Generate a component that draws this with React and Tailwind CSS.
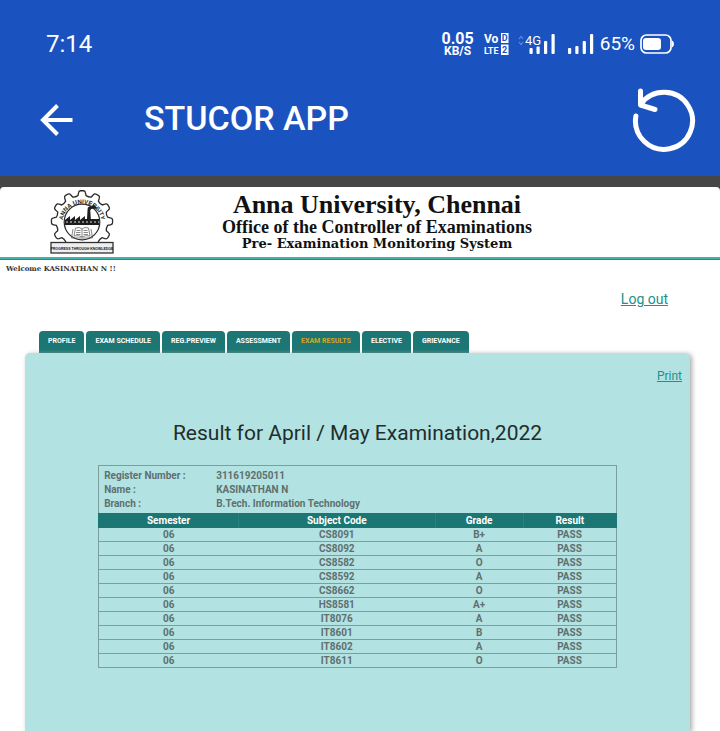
const tabs = ["PROFILE", "EXAM SCHEDULE", "REG.PREVIEW", "ASSESSMENT", "EXAM RESULTS", "ELECTIVE", "GRIEVANCE"];

const details = [
  ["Register Number :", "311619205011"],
  ["Name :", "KASINATHAN N"],
  ["Branch :", "B.Tech. Information Technology"],
];

const results = [
  ["06", "CS8091", "B+", "PASS"],
  ["06", "CS8092", "A", "PASS"],
  ["06", "CS8582", "O", "PASS"],
  ["06", "CS8592", "A", "PASS"],
  ["06", "CS8662", "O", "PASS"],
  ["06", "HS8581", "A+", "PASS"],
  ["06", "IT8076", "A", "PASS"],
  ["06", "IT8601", "B", "PASS"],
  ["06", "IT8602", "A", "PASS"],
  ["06", "IT8611", "O", "PASS"],
];

// Outline of a twelve-toothed gear around (cx, cy).
function gearPath(cx, cy, outer, root) {
  const at = (r, deg) => {
    const a = (deg * Math.PI) / 180;
    return `${(cx + r * Math.sin(a)).toFixed(2)} ${(cy - r * Math.cos(a)).toFixed(2)}`;
  };
  let d = `M${at(root, -9)}`;
  for (let i = 0; i < 12; i++) {
    const t = i * 30;
    d += `L${at(outer - 2, t - 7)}Q${at(outer, t - 6)} ${at(outer, t - 3)}L${at(outer, t + 3)}Q${at(outer, t + 6)} ${at(outer - 2, t + 7)}L${at(root, t + 9)}Q${at(root - 1, t + 15)} ${at(root, t + 21)}`;
  }
  return d + "Z";
}

function UniversityLogo() {
  return (
    <svg viewBox="0 0 64 64" className="size-16" role="img" aria-label="Anna University">
      <path d={gearPath(32, 31.3, 30.6, 26)} fill="#fff" stroke="#2b2b2b" strokeWidth="1.3" />
      <path id="ring" d="M12.6 33 A19.4 19.4 0 0 1 51.4 33" fill="none" />
      <text fontSize="6" fill="#222" className="font-['Liberation_Sans'] font-bold" textAnchor="middle">
        <textPath href="#ring" startOffset="50%">ANNA UNIVERSITY</textPath>
      </text>
      <circle cx="32" cy="32" r="17.8" fill="#fff" stroke="#2b2b2b" strokeWidth="1.2" />
      <path d="M15 35V30l5-4v4l5-4v4l5-4v4l5-4v3h2l.6-10h2.600l.6 10H49v6z" fill="#1d1d1d" />
      <path d="M37.500 18.500c1-3 5-1.500 6-3.500l4 3c-2 2-6-.5-7 2z" fill="#1d1d1d" />
      <path d="M16 32h33" stroke="#ddd" strokeWidth="1" strokeDasharray="2 2" />
      <path d="M25.500 38q4-1.500 6.500 1q2.500-2.500 6.500-1l1.500 8q-5-1-8 1q-3-2-8-1zM32 39v8M26.500 40.500h4M26 42.500h4.500M26 44.500h4.500M33.500 40.500h4M33.500 42.500h4.500M33.500 44.500h4.500M23 39l-1.500 9h21L41 39" fill="none" stroke="#555" strokeWidth=".7" />
      <rect x="1" y="52.500" width="62" height="10.500" fill="#eee" stroke="#333" strokeWidth="1.3" />
      <text x="32" y="59.500" fontSize="3.500" fill="#111" textAnchor="middle" className="font-['Liberation_Sans'] font-bold">
        PROGRESS THROUGH KNOWLEDGE
      </text>
    </svg>
  );
}

function VoLte() {
  return (
    <svg viewBox="0 0 25 22" className="h-[22px] w-[25px] font-[Roboto] font-bold" role="img" aria-label="VoLTE 2">
      <text x="0" y="10" fontSize="12" fill="#fff">Vo</text>
      <text x="0" y="21" fontSize="9" fill="#fff">LTE</text>
      <path d="M17 0h7.500v10H17zM17 11.500h7.500V22H17z" fill="#fff" />
      <text x="20.700" y="8.300" fontSize="9" fill="#1a53bf" textAnchor="middle">D</text>
      <text x="20.700" y="20" fontSize="9" fill="#1a53bf" textAnchor="middle">2</text>
    </svg>
  );
}

function MobileSignal() {
  return (
    <svg viewBox="0 0 38 22" className="h-[22px] w-[38px]" role="img" aria-label="4G signal">
      <path d="M1 6l2-2.500L5 6M1 9l2 2.500L5 9" fill="none" stroke="#5f8bdd" strokeWidth="1.200" />
      <text x="7" y="12" fontSize="13" fill="#fff" className="font-[Roboto]">4G</text>
      <g fill="#fff">
        <rect x="11.500" y="15" width="3.200" height="6" rx="1" />
        <rect x="18.500" y="13.500" width="3.200" height="7.500" rx="1" />
        <rect x="26" y="8" width="3.200" height="13" rx="1" />
        <rect x="33.500" y="1" width="3.200" height="20" rx="1" />
      </g>
    </svg>
  );
}

function Signal() {
  return (
    <svg viewBox="0 0 27 22" className="h-[22px] w-[27px]" role="img" aria-label="Signal" fill="#fff">
      <rect x="1" y="15" width="3.200" height="6" rx="1" />
      <rect x="8.300" y="13" width="3.200" height="8" rx="1" />
      <rect x="15.700" y="8" width="3.200" height="13" rx="1" />
      <rect x="23" y="1" width="3.200" height="20" rx="1" />
    </svg>
  );
}

function Battery() {
  return (
    <svg viewBox="0 0 34 20" className="h-5 w-[34px]" role="img" aria-label="Battery">
      <rect x="1" y="1" width="30" height="18" rx="5.500" fill="none" stroke="#fff" strokeWidth="1.700" />
      <rect x="3" y="4" width="18" height="12" rx="3" fill="#fff" />
      <path d="M32 6.500q2 .5 2 3.500t-2 3.500z" fill="#fff" />
    </svg>
  );
}

function AppHeader() {
  return (
    <header className="h-44 bg-[#1a53bf] font-[Roboto,sans-serif] text-white">
      <div className="flex h-[88px] items-center justify-between px-[46px]">
        <span className="text-2xl">7:14</span>
        <div className="flex items-center">
          <div className="mr-[10px] text-center font-bold">
            <div className="text-base leading-[14px]">0.05</div>
            <div className="text-xs leading-[11px]">KB/S</div>
          </div>
          <span className="mr-[9px]"><VoLte /></span>
          <span className="mr-[11px]"><MobileSignal /></span>
          <span className="mr-[6px]"><Signal /></span>
          <span className="mr-[5px] text-[19px]">65%</span>
          <Battery />
        </div>
      </div>
      <div className="flex h-16 items-center pr-6 pl-10">
        <button type="button" aria-label="Back" className="mr-[71px]">
          <svg viewBox="0 0 33 32" className="h-8 w-[33px]" fill="none" stroke="#fff" strokeWidth="4">
            <path d="M17.500 1.500L3 16l14.500 14.500M3 16h29.500" />
          </svg>
        </button>
        <h1 className="flex-1 pb-1 text-[34px] font-medium">STUCOR APP</h1>
        <button type="button" aria-label="Reload">
          <svg viewBox="0 0 64 66" className="h-[66px] w-16" fill="none" stroke="#fff" strokeWidth="5" strokeLinecap="round" strokeLinejoin="round">
            <path d="M3.900 29A28.500 28.500 0 1 0 9 17M8.500 4v14L23 22.500" />
          </svg>
        </button>
      </div>
    </header>
  );
}

export default function App() {
  return (
    <div className="flex min-h-screen flex-col bg-[#464646]">
      <AppHeader />
      <div className="mt-[11px] flex flex-1 flex-col rounded-t bg-white">
        <div className="relative flex h-[70px] justify-center">
          <div className="absolute top-[3px] left-[50px]"><UniversityLogo /></div>
          <div className="pt-[5px] pl-[34px] text-center font-['Liberation_Serif',serif] font-bold text-[#111]">
            <p className="text-[26px] leading-[26px]">Anna University, Chennai</p>
            <p className="text-lg leading-[18px]">Office of the Controller of Examinations</p>
            <p className="font-['DejaVu_Serif',serif] text-[13px] leading-4">Pre- Examination Monitoring System</p>
          </div>
        </div>
        <div className="h-[3px] border-b border-[#2f8583] bg-[#41b3ab]" />
        <p className="pt-px pl-[6px] font-['DejaVu_Serif',serif] text-[7px] leading-4 font-bold text-[#333]">Welcome KASINATHAN N !!</p>
        <div className="flex h-[54px] items-start justify-end pt-3 pr-[52px] font-[Roboto,sans-serif]">
          <a href="#logout" className="text-sm text-[#22908d] underline">Log out</a>
        </div>
        <nav className="flex gap-[2px] pl-[39px] font-[Roboto,sans-serif] text-[7px] leading-5 font-bold">
          {tabs.map((tab) => (
            <a
              key={tab}
              href={`#${tab}`}
              className={`h-[22px] rounded-t-[4px] bg-[#1c7774] px-[9px] ${tab === "EXAM RESULTS" ? "text-[#d9a520]" : "text-white"}`}
            >
              {tab}
            </a>
          ))}
        </nav>
        <main className="mr-[30px] ml-[25px] flex-1 rounded-t-[5px] bg-[#b2e2e1] font-[Roboto,sans-serif] shadow-[2px_1px_5px_#aaaaaa]">
          <div className="flex justify-end pt-[14px] pr-2">
            <a href="#print" className="text-xs leading-[18px] text-[#22908d] underline">Print</a>
          </div>
          <h2 className="pt-[34px] text-center text-[21px] leading-7 text-[#222d2c]">Result for April / May Examination,2022</h2>
          <div className="mt-[18px] mr-[11%] ml-[11%] text-[10px] font-bold text-[#5f706f]">
            <dl className="border border-b-0 border-[#7b9f9d] pt-[3px] pb-[2px]">
              {details.map(([label, value]) => (
                <div key={label} className="flex pl-[5px] leading-[14px]">
                  <dt className="w-28">{label}</dt>
                  <dd>{value}</dd>
                </div>
              ))}
            </dl>
            <table className="w-full table-fixed border-collapse text-center leading-[13px]">
              <colgroup>
                <col className="w-[27%]" />
                <col className="w-[38%]" />
                <col className="w-[17%]" />
                <col className="w-[18%]" />
              </colgroup>
              <thead>
                <tr className="border border-[#1c7774] bg-[#1c7774] text-white">
                  <th className="border-r border-[#2b817e] p-0">Semester</th>
                  <th className="border-r border-[#2b817e] p-0">Subject Code</th>
                  <th className="border-r border-[#2b817e] p-0">Grade</th>
                  <th className="p-0">Result</th>
                </tr>
              </thead>
              <tbody>
                {results.map((row) => (
                  <tr key={row[1]} className="border border-[#7b9f9d]">
                    {row.map((cell, i) => (
                      <td key={i} className="p-0">{cell}</td>
                    ))}
                  </tr>
                ))}
              </tbody>
            </table>
          </div>
        </main>
      </div>
    </div>
  );
}
